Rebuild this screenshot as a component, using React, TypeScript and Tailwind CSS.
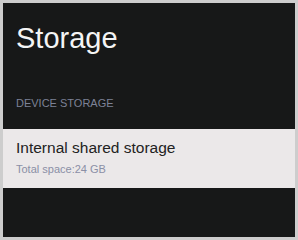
export default function App() {
  return (
    <div className="w-[298px] h-[240px] bg-[#cdcdcd] pt-[3px] pl-[3px] pr-[3px] pb-[3px] font-['Liberation_Sans',Arial,sans-serif]">
      <div className="flex flex-col h-full bg-[#171818]">
        <h1 className="pt-[19px] pl-[13px] text-[29px] leading-[33px] text-[#f4f4f4]">Storage</h1>
        <p className="mt-[42px] pl-[13px] text-[11px] leading-[13px] text-[#7d8296]">DEVICE STORAGE</p>

        {/* storage row */}
        <div className="mt-[19px] flex flex-col bg-[#ebe8e9] pl-[13px] pt-[10px] pb-[12px]">
          <p className="text-[15.5px] leading-[18px] text-[#222222]">Internal shared storage</p>
          <p className="mt-[6px] text-[11px] leading-[13px] text-[#8a8fa6]">Total space:24 GB</p>
        </div>
      </div>
    </div>
  );
}
